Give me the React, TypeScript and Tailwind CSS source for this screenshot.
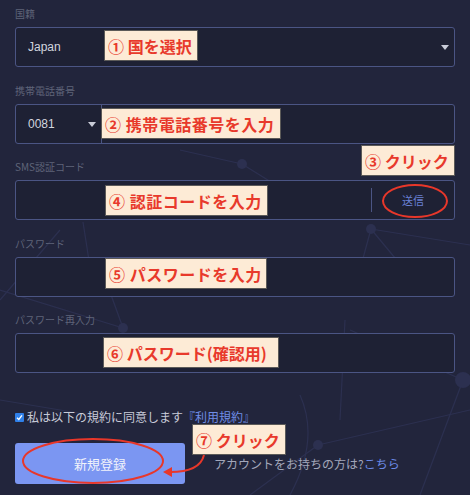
import React from "react";

const UI_FONT = { fontFamily: '"Liberation Sans", "Noto Sans CJK JP", sans-serif' };
const JP_FONT = { fontFamily: '"Noto Sans CJK JP", sans-serif' };

function Label({ children, mt }: { children: React.ReactNode; mt: string }) {
  return (
    <div className={`${mt} h-[14px] leading-[14px] text-[10px] text-[#5f6479]`} style={JP_FONT}>
      {children}
    </div>
  );
}

function Triangle() {
  return (
    <div className="w-0 h-0 border-l-[4px] border-r-[4px] border-t-[5px] border-l-transparent border-r-transparent border-t-[#c9ccd8]" />
  );
}

function Note({ className, children, tracking }: { className: string; children: React.ReactNode; tracking: string }) {
  return (
    <div
      className={`absolute z-20 h-[31px] flex items-center pl-[3px] bg-[#fdebd6] border border-[#5c5a58] text-[#e8392b] font-bold text-[16px] whitespace-nowrap overflow-hidden ${tracking} ${className}`}
      style={JP_FONT}
    >
      {children}
    </div>
  );
}

export default function App() {
  return (
    <div className="relative w-[470px] h-[495px] overflow-hidden bg-[#22253c]" style={UI_FONT}>
      <svg className="absolute inset-0 z-0" width="470" height="495" viewBox="0 0 470 495" fill="none">
        <g stroke="#2c3050" strokeWidth="1.2">
          <line x1="242" y1="164" x2="300" y2="200" />
          <line x1="242" y1="164" x2="180" y2="150" />
          <line x1="83" y1="222" x2="92" y2="280" />
          <line x1="0" y1="290" x2="123" y2="328" />
          <line x1="110" y1="292" x2="123" y2="328" />
          <line x1="0" y1="300" x2="60" y2="230" />
          <line x1="371" y1="229" x2="362" y2="262" />
          <line x1="371" y1="229" x2="395" y2="258" />
          <line x1="371" y1="229" x2="470" y2="245" />
          <line x1="463" y1="380" x2="350" y2="330" />
          <line x1="463" y1="380" x2="420" y2="495" />
          <line x1="0" y1="400" x2="120" y2="420" />
          <line x1="318" y1="445" x2="250" y2="495" />
          <line x1="318" y1="445" x2="470" y2="410" />
          <path d="M300 395 Q 320 440 290 495" />
          <line x1="345" y1="320" x2="340" y2="420" />
        </g>
        <g fill="#2c3050">
          <circle cx="242" cy="164" r="5" />
          <circle cx="371" cy="229" r="5" />
          <circle cx="123" cy="328" r="5" />
          <circle cx="463" cy="380" r="8" />
          <circle cx="318" cy="445" r="5" />
        </g>
      </svg>

      <div className="relative z-10 px-[15px] pt-[7px]">
        <Label mt="mt-0">国籍</Label>
        <div className="mt-[6px] h-[40px] rounded-[3px] border border-[#4b5584] bg-[#1e2134] flex items-center justify-between pl-[12px] pr-[5px]">
          <span className="text-[12px] text-[#d2d5df]">Japan</span>
          <Triangle />
        </div>

        <Label mt="mt-[17px]">携帯電話番号</Label>
        <div className="mt-[6px] h-[40px] rounded-[3px] border border-[#4b5584] bg-[#1e2134] flex">
          <div className="w-[86px] h-full border-r border-[#4b5584] flex items-center justify-between pl-[12px] pr-[5px]">
            <span className="text-[12px] text-[#d2d5df]">0081</span>
            <Triangle />
          </div>
        </div>

        <Label mt="mt-[16px]">SMS認証コード</Label>
        <div className="mt-[6px] h-[40px] rounded-[3px] border border-[#4b5584] bg-[#1e2134] flex items-center justify-end">
          <div className="w-[83px] h-[24px] border-l border-[#4b5584] flex items-center justify-center">
            <span className="text-[11px] text-[#6a80d6]" style={JP_FONT}>送信</span>
          </div>
        </div>

        <Label mt="mt-[17px]">パスワード</Label>
        <div className="mt-[6px] h-[40px] rounded-[3px] border border-[#4b5584] bg-[#1e2134]" />

        <Label mt="mt-[16px]">パスワード再入力</Label>
        <div className="mt-[6px] h-[40px] rounded-[3px] border border-[#4b5584] bg-[#1e2134]" />

        <div className="mt-[35px] h-[18px] flex items-center gap-[3px]" style={JP_FONT}>
          <div className="w-[9px] h-[9px] rounded-[1px] bg-[#2f80ea] flex items-center justify-center">
            <svg width="7" height="7" viewBox="0 0 7 7" fill="none">
              <path d="M1 3.8 L2.8 5.5 L6 1.3" stroke="#ffffff" strokeWidth="1.3" />
            </svg>
          </div>
          <span className="text-[12px] text-[#c8cbd8]">
            私は以下の規約に同意します<span className="text-[#6f8de6]">『利用規約』</span>
          </span>
        </div>

        <div className="mt-[17px] flex items-center gap-[29px]">
          <div className="w-[170px] h-[41px] rounded-[3px] bg-[#7b96f2] flex items-center justify-center">
            <span className="text-[13px] text-[#f1f3fb]" style={JP_FONT}>新規登録</span>
          </div>
          <span className="text-[12px] text-[#a3a7ba]" style={JP_FONT}>
            アカウントをお持ちの方は?<span className="text-[#6b8ae6]">こちら</span>
          </span>
        </div>
      </div>

      <Note className="left-[104px] top-[30px] w-[94px]" tracking="tracking-[0px]">① 国を選択</Note>
      <Note className="left-[101px] top-[108px] w-[180px]" tracking="tracking-[0.5px]">② 携帯電話番号を入力</Note>
      <Note className="left-[361px] top-[145px] w-[94px]" tracking="tracking-[0px]">③ クリック</Note>
      <Note className="left-[105px] top-[185px] w-[163px]" tracking="tracking-[0.5px]">④ 認証コードを入力</Note>
      <Note className="left-[105px] top-[258px] w-[162px]" tracking="tracking-[0.5px]">⑤ パスワードを入力</Note>
      <Note className="left-[103px] top-[337px] w-[176px]" tracking="tracking-[0px]">⑥ パスワード(確認用)</Note>
      <Note className="left-[192px] top-[424px] w-[94px]" tracking="tracking-[0px]">⑦ クリック</Note>

      <svg className="absolute inset-0 z-30 pointer-events-none" width="470" height="495" viewBox="0 0 470 495" fill="none">
        <ellipse cx="415" cy="201" rx="32" ry="16" stroke="#e8372a" strokeWidth="2" />
        <ellipse cx="93" cy="461" rx="70" ry="22" stroke="#e8372a" strokeWidth="2" />
        <path d="M204 455 Q 200 472 170 472" stroke="#e8372a" strokeWidth="2" />
        <path d="M163 472 L172 467 L172 477 Z" fill="#e8372a" />
      </svg>
    </div>
  );
}
